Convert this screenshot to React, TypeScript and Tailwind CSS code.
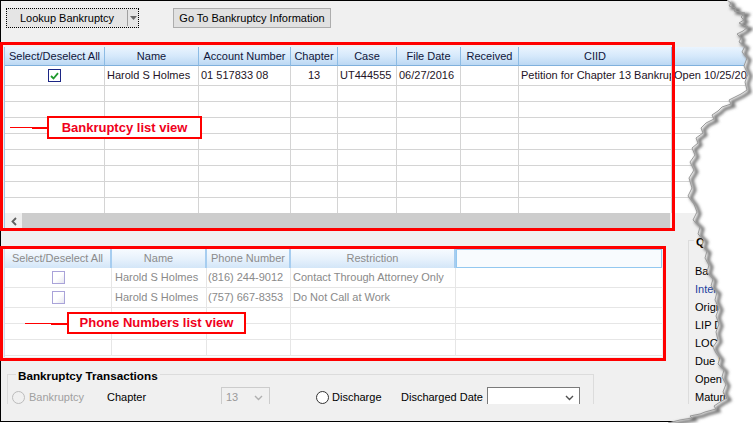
import React from "react";

interface Col {
  label: string;
  w: string;
}

const bankCols: Col[] = [
  { label: "Select/Deselect All", w: "w-[100px]" },
  { label: "Name", w: "w-[94px]" },
  { label: "Account Number", w: "w-[92px]" },
  { label: "Chapter", w: "w-[47px]" },
  { label: "Case", w: "w-[59px]" },
  { label: "File Date", w: "w-[64px]" },
  { label: "Received", w: "w-[58px]" },
  { label: "CIID", w: "w-[153px]" },
  { label: "", w: "w-[110px]" },
];

const bankRow = [
  "",
  "Harold S Holmes",
  "01 517833 08",
  "13",
  "UT444555",
  "06/27/2016",
  "",
  "Petition for Chapter 13 Bankruptcy",
  "Open 10/25/2016",
];

const phoneCols: Col[] = [
  { label: "Select/Deselect All", w: "w-[107px]" },
  { label: "Name", w: "w-[95px]" },
  { label: "Phone Number", w: "w-[84px]" },
  { label: "Restriction", w: "w-[165px]" },
];

const phones = [
  { name: "Harold S Holmes", phone: "(816) 244-9012", restriction: "Contact Through Attorney Only" },
  { name: "Harold S Holmes", phone: "(757) 667-8353", restriction: "Do Not Call at Work" },
];

const sideLabels = ["Balance", "Interest", "Original", "LIP Date", "LOC", "Due Date", "Open Date", "Maturity"];

// torn right edge of the screenshot
const edge: [number, number][] = [
  [727, 0], [731, 3], [729, 6], [736, 8], [734, 11], [745, 13], [741, 17], [744, 20], [739, 23],
  [748, 27], [743, 31], [737, 34], [741, 38], [739, 42], [745, 46], [742, 52], [747, 58], [744, 66],
  [748, 74], [745, 82], [747, 90], [741, 94], [735, 97], [729, 100], [731, 104], [722, 107],
  [718, 111], [712, 115], [714, 119], [706, 123], [701, 128], [703, 133], [696, 138], [698, 143],
  [692, 148], [695, 155], [690, 162], [694, 170], [689, 178], [692, 188], [688, 196], [694, 204],
  [697, 212], [693, 220], [700, 227], [698, 234], [704, 240], [702, 246], [707, 251], [705, 258],
  [709, 265], [707, 272], [713, 279], [711, 286], [717, 292], [715, 300], [719, 308], [716, 316],
  [719, 324], [716, 332], [718, 340], [713, 347], [716, 353], [720, 358], [718, 364], [724, 370],
  [722, 377], [726, 384], [723, 392], [727, 398], [720, 402], [714, 406], [716, 409], [705, 412],
  [700, 414], [690, 416], [692, 418], [680, 420], [672, 422], [668, 423],
];

function SmallChevron({ color }: { color: string }) {
  return (
    <svg width="9" height="6" viewBox="0 0 9 6">
      <path d="M1 1 L4.5 4.5 L8 1" fill="none" stroke={color} strokeWidth="1.4" />
    </svg>
  );
}

function CheckedBox() {
  return (
    <div className="flex h-[13px] w-[13px] items-center justify-center border border-[#1c2685] bg-white">
      <svg width="9" height="8" viewBox="0 0 9 8">
        <path d="M1 4 L3.5 6.5 L8 1.2" fill="none" stroke="#1f9a2c" strokeWidth="1.8" />
      </svg>
    </div>
  );
}

function DisabledBox() {
  return (
    <div className="h-[13px] w-[13px] border border-[#a9a3d9] bg-linear-to-br from-white via-white to-[#e6e6ee]" />
  );
}

function BankruptcyList() {
  return (
    <div className="ml-[3px] mt-[19px] flex h-[183px] w-[760px] flex-col overflow-hidden border-l border-[#9cc6e6] bg-white">
      {/* Header */}
      <div className="flex h-[19px] shrink-0">
        {bankCols.map((c, i) => (
          <div
            key={i}
            className={`${c.w} h-full shrink-0 border-b border-r border-b-[#7fb0dc] border-r-[#8cbbe4] bg-linear-to-b from-[#eaf4fe] via-[#d6e9fb] to-[#bcd8f3] text-center leading-[19px] text-[#10163a]`}
          >
            {c.label}
          </div>
        ))}
      </div>
      {/* Row with data */}
      <div className="flex h-[20px] shrink-0">
        {bankRow.map((v, i) => (
          <div
            key={i}
            className={`${bankCols[i].w} flex h-full shrink-0 items-center overflow-hidden whitespace-nowrap border-b border-r border-[#d4d4d4] px-[2px] text-[#241326] ${
              i === 0 || i === 3 ? "justify-center" : ""
            }`}
          >
            {i === 0 ? <CheckedBox /> : v}
          </div>
        ))}
      </div>
      {/* Empty rows */}
      <div className="h-[127px] shrink-0 overflow-hidden">
        {Array.from({ length: 8 }).map((_, r) => (
          <div key={r} className="flex h-[16px]">
            {bankCols.map((c, i) => (
              <div key={i} className={`${c.w} h-full shrink-0 border-b border-r border-[#d4d4d4]`} />
            ))}
          </div>
        ))}
      </div>
      {/* Horizontal scrollbar */}
      <div className="flex h-[17px] shrink-0 bg-[#f0f0f0]">
        <div className="flex h-full w-[17px] items-center justify-center">
          <svg width="6" height="9" viewBox="0 0 6 9">
            <path d="M5 1 L1.5 4.5 L5 8" fill="none" stroke="#606060" strokeWidth="1.8" />
          </svg>
        </div>
        <div className="h-full w-[648px] bg-[#cdcdcd]" />
      </div>
    </div>
  );
}

function PhoneList() {
  return (
    <div className="ml-[3px] mt-[19px] flex h-[108px] w-[658px] flex-col overflow-hidden border-l border-[#c9def0] bg-white">
      <div className="flex h-[19px] shrink-0">
        {phoneCols.map((c, i) => (
          <div
            key={i}
            className={`${c.w} h-full shrink-0 border-r-2 border-[#a6cdf0] bg-linear-to-b from-[#f7fbff] via-[#e8f2fc] to-[#d3e6f8] text-center leading-[19px] text-[#8b8b8b]`}
          >
            {c.label}
          </div>
        ))}
        <div className="h-full w-[206px] shrink-0 border border-[#93c8f0] bg-[#f8fbfe]" />
      </div>
      {phones.map((p, r) => (
        <div key={r} className="flex h-[20px] shrink-0 text-[#8a8a8a]">
          <div className={`${phoneCols[0].w} flex h-full shrink-0 items-center justify-center border-b border-r border-[#e6e6e6]`}>
            <DisabledBox />
          </div>
          <div className={`${phoneCols[1].w} flex h-full shrink-0 items-center border-b border-r border-[#e6e6e6] pl-[3px]`}>
            {p.name}
          </div>
          <div className={`${phoneCols[2].w} flex h-full shrink-0 items-center border-b border-r border-[#e6e6e6] pl-[1px]`}>
            {p.phone}
          </div>
          <div className={`${phoneCols[3].w} flex h-full shrink-0 items-center border-b border-r border-[#e6e6e6] pl-[2px]`}>
            {p.restriction}
          </div>
          <div className="h-full w-[206px] shrink-0 border-b border-[#e6e6e6]" />
        </div>
      ))}
      {Array.from({ length: 3 }).map((_, r) => (
        <div key={r} className="flex h-[16px] shrink-0">
          {phoneCols.map((c, i) => (
            <div key={i} className={`${c.w} h-full shrink-0 border-b border-r border-[#e6e6e6]`} />
          ))}
          <div className="h-full w-[206px] shrink-0 border-b border-[#e6e6e6]" />
        </div>
      ))}
    </div>
  );
}

function TransactionsGroup() {
  return (
    <div className="relative ml-[6px] mt-[17px] h-[60px] w-[587px] border border-[#dcdcdc] pt-[12px] pl-[4px]">
      <span className="absolute -top-[8px] left-[8px] whitespace-nowrap bg-[#f0f0f0] px-[2px] text-[11.7px] font-bold text-black">
        Bankruptcy Transactions
      </span>
      <div className="flex h-[21px] items-center">
        <div className="flex w-[95px] items-center">
          <div className="h-[13px] w-[13px] rounded-full border border-[#bcbcbc] bg-[#f0f0f0]" />
          <span className="ml-[4px] text-[#a0a0a0]">Bankruptcy</span>
        </div>
        <span className="w-[114px]">Chapter</span>
        <div className="flex h-[21px] w-[49px] items-center justify-between border border-[#cccccc] bg-[#f0f0f0] pl-[4px] pr-[6px] text-[#9a9a9a]">
          <span>13</span>
          <SmallChevron color="#b0b0b0" />
        </div>
        <div className="ml-[46px] flex w-[85px] items-center">
          <div className="h-[13px] w-[13px] rounded-full border border-[#333333] bg-white" />
          <span className="ml-[3px]">Discharge</span>
        </div>
        <span className="w-[86px]">Discharged Date</span>
        <div className="flex h-[21px] w-[93px] items-center justify-end border border-[#7a7a7a] bg-white pr-[5px]">
          <SmallChevron color="#505050" />
        </div>
      </div>
    </div>
  );
}

function SidePanel() {
  return (
    <div className="relative ml-[26px] mt-[10px] h-[200px] w-[80px] border-l border-t border-[#dcdcdc] pt-[21px] pl-[6px]">
      <span className="absolute -top-[8px] left-[5px] whitespace-nowrap bg-[#f0f0f0] px-[2px] text-[11.7px] font-bold text-black">
        Quick Info
      </span>
      {sideLabels.map((l, i) => (
        <div key={l} className={`h-[18px] whitespace-nowrap leading-[18px] ${i === 1 ? "text-[#1a3f9e]" : "text-black"}`}>
          {l}
        </div>
      ))}
    </div>
  );
}

export default function App() {
  const pts = edge.map(([x, y]) => `${x},${y}`).join(" ");
  return (
    <div className="relative h-[423px] w-[753px] overflow-hidden bg-white font-['Liberation_Sans',Arial,sans-serif] text-[11px] text-black">
      {/* Window */}
      <div className="flex h-[422px] w-[753px] flex-col border-b border-l border-t border-black bg-[#f0f0f0]">
        <div className="h-[403px] overflow-hidden">
          {/* Toolbar */}
          <div className="ml-[5px] mt-[7px] flex h-[20px] items-center">
            <div className="flex h-[20px] w-[133px] items-center border border-dotted border-black bg-[#e5e5e5]">
              <span className="w-[120px] text-center">Lookup Bankruptcy</span>
              <div className="flex h-[16px] flex-1 items-center justify-center border-l border-[#a0a0a0]">
                <svg width="7" height="4" viewBox="0 0 7 4">
                  <path d="M0 0 L7 0 L3.5 4 Z" fill="#6a6a6a" />
                </svg>
              </div>
            </div>
            <button className="ml-[34px] h-[20px] w-[158px] border border-[#adadad] bg-[#e1e1e1] text-center">
              Go To Bankruptcy Information
            </button>
          </div>

          <BankruptcyList />

          <div className="flex">
            <div className="flex w-[661px] shrink-0 flex-col">
              <PhoneList />
              <TransactionsGroup />
            </div>
            <SidePanel />
          </div>
        </div>
      </div>

      {/* Annotation frames */}
      <div className="pointer-events-none absolute left-0 top-[42px] h-[189px] w-[675px] border-[3px] border-[#ff0000]" />
      <div className="pointer-events-none absolute left-0 top-[246px] h-[115px] w-[666px] border-[3px] border-[#ff0000]" />

      {/* Callouts */}
      <div className="absolute left-[10px] top-[127px] h-[1px] w-[22px] bg-[#ff0000]" />
      <div className="absolute left-[32px] top-[127px] h-[2px] w-[15px] bg-[#ff0000]" />
      <div className="absolute left-[47px] top-[116px] flex h-[23px] w-[155px] items-center justify-center border-2 border-[#ff0000] bg-white text-[13px] font-bold text-[#f0001c]">
        Bankruptcy list view
      </div>
      <div className="absolute left-[25px] top-[323px] h-[1px] w-[26px] bg-[#ff0000]" />
      <div className="absolute left-[51px] top-[323px] h-[2px] w-[16px] bg-[#ff0000]" />
      <div className="absolute left-[67px] top-[312px] flex h-[22px] w-[179px] items-center justify-center border-2 border-[#ff0000] bg-white text-[13px] font-bold text-[#f0001c]">
        Phone Numbers list view
      </div>

      {/* Torn edge */}
      <svg className="pointer-events-none absolute left-0 top-0" width="753" height="423" viewBox="0 0 753 423">
        <defs>
          <filter id="tearBlur" x="-10%" y="-10%" width="120%" height="120%">
            <feGaussianBlur stdDeviation="1.6" />
          </filter>
        </defs>
        <polygon points={`${pts} 753,423 753,0`} fill="#ffffff" />
        <polyline
          points={pts}
          fill="none"
          stroke="#6e6e6e"
          strokeWidth="3"
          filter="url(#tearBlur)"
          transform="translate(3,2)"
        />
        <polyline points={pts} fill="none" stroke="#9a9a9a" strokeWidth="1" />
      </svg>
    </div>
  );
}
